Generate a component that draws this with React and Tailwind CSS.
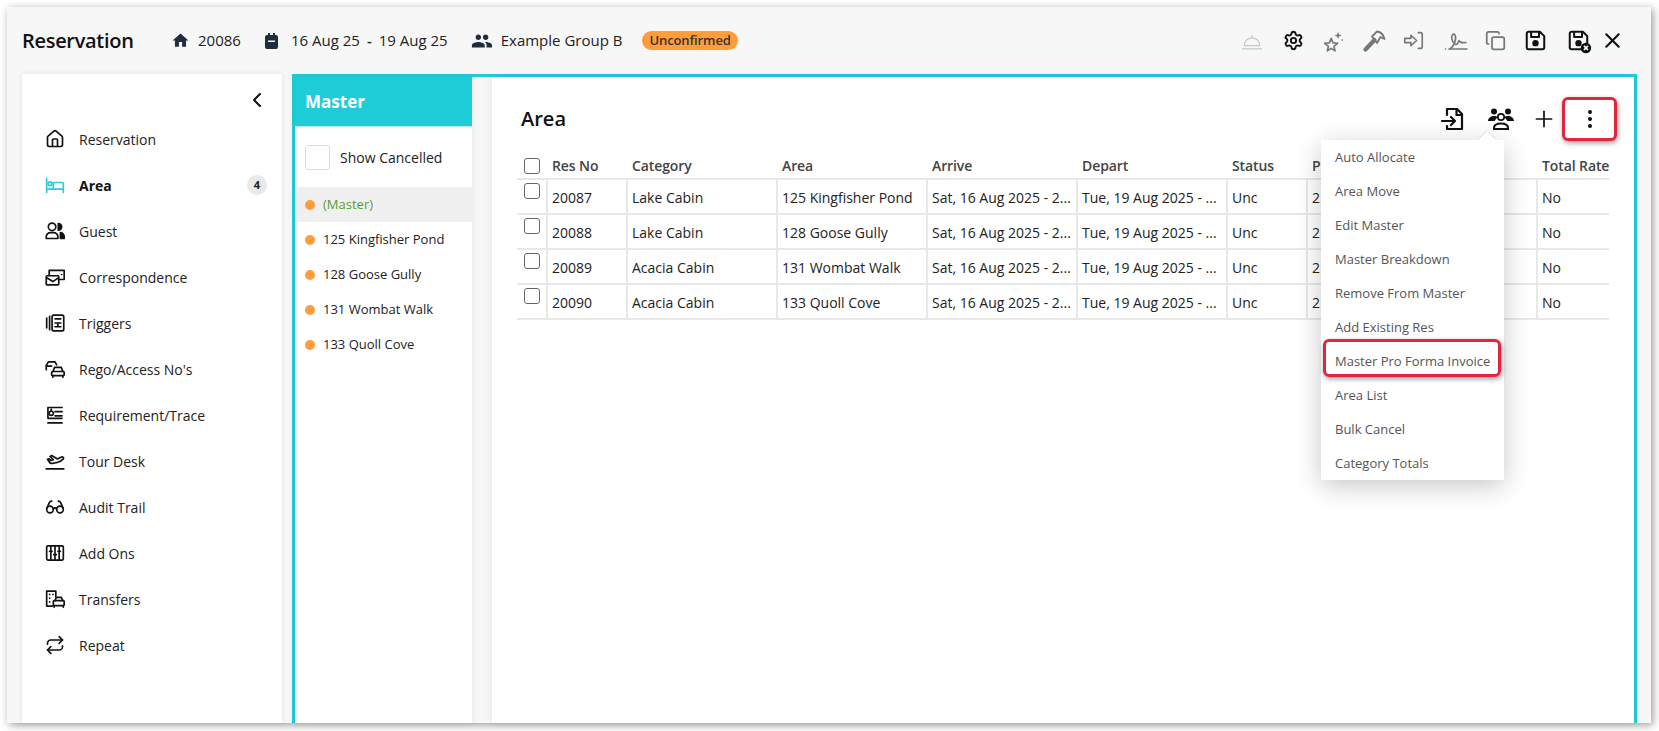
import { ChevronLeft, Plus, X, Home, Settings, Copy, Repeat, Glasses } from "lucide-react"
import { MdHome, MdPeople } from "react-icons/md"

// --- small drawn icons ---
const Svg = ({ children, size = 20, className = "", width = "2" }) => (
  <svg width={size} height={size} viewBox="0 0 24 24" fill="none" stroke="currentColor" strokeWidth={width} strokeLinecap="round" strokeLinejoin="round" className={className}>
    {children}
  </svg>
)

const BedIcon = () => (
  <Svg>
    <path d="M2 4v17M2 17h20M22 21V11a2 2 0 0 0-2-2H10v8" />
    <circle cx="6" cy="10.500" r="2.300" />
  </Svg>
)
const GuestIcon = () => (
  <Svg>
    <circle cx="8.500" cy="7" r="4.500" />
    <path d="M1.500 21v-2a5 5 0 0 1 5-5h4a5 5 0 0 1 5 5v2z" />
    <path d="M16 3a4 4 0 0 1 0 8z" fill="currentColor" />
    <path d="M18.500 14a4.500 4.500 0 0 1 4.500 4.500V21h-4.500z" fill="currentColor" />
  </Svg>
)
const MailIcon = () => (
  <Svg>
    <path d="M5 10V4h18v11h-6" />
    <rect x="1.500" y="10.500" width="15" height="11" rx="1" />
    <path d="M2 13l7.500 4.500L16 13" />
    <path d="M20 9h.1" />
  </Svg>
)
const TriggerIcon = () => (
  <Svg>
    <path d="M5.500 4v16M2 6v12" />
    <rect x="8.500" y="2.500" width="14" height="19" rx="2" />
    <path d="M12 7h7M12 12h7M12 16.500h7M15.500 12v4.500" />
  </Svg>
)
const CarsIcon = () => (
  <Svg>
    <path d="M1.500 13V8L4 3.500h8L14 7" />
    <path d="M1.500 8.500H8" />
    <path d="M9.500 15l2-5h8l2 5" />
    <rect x="8" y="15" width="15" height="5" rx="1" />
    <path d="M9.500 20v2M21.500 20v2" />
  </Svg>
)
const TraceIcon = () => (
  <Svg>
    <path d="M3.500 3h17M3.500 3v12M12 8h8.500M12 13h8.500M3.500 16h17M3.500 21.500h17" />
    <circle cx="7.500" cy="10" r="2.500" />
    <path d="M7.500 5v2" />
  </Svg>
)
const PlaneIcon = () => (
  <Svg>
    <path d="M1.500 21.500h21" />
    <path d="M3 10l3 4.500c5 1 12.500-1 16-5 1-2-1-3-3-2l-4 2-7-4-2 1 4 4-3 1-2-2z" />
  </Svg>
)
const AddOnIcon = () => (
  <Svg>
    <rect x="2" y="3.500" width="20" height="17" rx="1.500" />
    <path d="M7 3.500v17M12 3.500v17M17 3.500v17" />
    <path d="M5.500 10h3M10.500 14h3M15.500 10h3" />
  </Svg>
)
const TransferIcon = () => (
  <Svg>
    <path d="M9 20.500H2V2.500h11v7" />
    <path d="M5.500 6.500h.1M9.500 6.500h.1M5.500 11h.1M5.500 15.500h.1" />
    <path d="M12 14l1.500-4h6l2 4" />
    <rect x="10" y="14" width="13" height="6" rx="1" />
    <path d="M11 20v2M22 20v2" />
  </Svg>
)
const BellIcon = () => (
  <Svg size={22} width="1.400">
    <path d="M3.500 17a8.500 8.500 0 0 1 17 0z" />
    <path d="M1.500 20.500h21" />
    <path d="M12 8V6" />
  </Svg>
)
const StarsIcon = () => (
  <Svg size={22} width="1.800">
    <path d="M10 9l2 5 5 .5-4 3.300 1.200 5-4.200-2.800-4.200 2.800 1.200-5-4-3.300 5-.5z" />
    <path d="M17.500 2l1 3 3 1-3 1-1 3-1-3-3-1 3-1z" fill="currentColor" stroke="none" />
    <path d="M22 11h.1" />
  </Svg>
)
const HammerIcon = () => (
  <svg width="24" height="24" viewBox="0 0 24 24" fill="none" stroke="currentColor" strokeLinejoin="round" strokeLinecap="round">
    <path d="M3.500 20.500L12.500 11" strokeWidth="4.200" />
    <path d="M10 7.500L15 2.500c3.500.5 6.500 3 7.500 7.500L18.500 8l-3.500 6z" strokeWidth="1.800" />
  </svg>
)
const SignInIcon = () => (
  <Svg size={21} width="1.900">
    <path d="M2 9.500h7V6l6.500 6L9 18v-3.500H2z" />
    <path d="M17.500 3H20a2 2 0 0 1 2 2v14a2 2 0 0 1-2 2h-2.500" />
  </Svg>
)
const SignatureIcon = () => (
  <Svg size={24} width="1.600">
    <path d="M1.500 20h.1M6 20c4-3 7-10 5-14-1.500-2.500-4 .5-3 4.500 1 4 5 7 6 3l1-2c1 2.500 3 2.500 7 2" />
    <path d="M5 20h18" />
  </Svg>
)
const SaveIcon = ({ cross }) => (
  <svg width="21" height="21" viewBox="0 0 24 24" fill="none" stroke="currentColor" strokeWidth="2.300" strokeLinejoin="round" className="overflow-visible">
    <path d="M2 4a2 2 0 0 1 2-2h13l5 5v13a2 2 0 0 1-2 2H4a2 2 0 0 1-2-2z" />
    <path d="M7 2v6h9V2" />
    <circle cx="12" cy="15" r="2.500" fill="currentColor" />
    {cross && (
      <g>
        <circle cx="20.500" cy="20.500" r="6" fill="currentColor" stroke="none" />
        <path d="M18.200 18.200l4.600 4.600M22.800 18.200l-4.600 4.600" stroke="#fff" strokeWidth="1.800" />
      </g>
    )}
  </svg>
)
const CalendarIcon = () => (
  <svg width="13" height="16" viewBox="0 0 13 16" fill="currentColor">
    <path fillRule="evenodd" d="M3 0h2v2h3V0h2v2h1a2 2 0 0 1 2 2v10a2 2 0 0 1-2 2H2a2 2 0 0 1-2-2V4a2 2 0 0 1 2-2h1zM3 7.500v1.500h7V7.500z" />
  </svg>
)
const DocInIcon = () => (
  <svg width="24" height="24" viewBox="0 0 24 24" fill="none" stroke="currentColor" strokeWidth="2.200" strokeLinejoin="round" strokeLinecap="round">
    <path d="M6 8V2h10l5 5v15H6v-3" />
    <path d="M15.500 2v6H21" />
    <path d="M1 14h13M10 10l4 4-4 4" />
  </svg>
)
const GroupIcon = () => (
  <svg width="26" height="22" viewBox="0 0 26 22" fill="currentColor">
    <circle cx="6" cy="3.500" r="3" />
    <circle cx="20" cy="3.500" r="3" />
    <path d="M0 13c0-3 3-5 6-5 1.500 0 3 .4 4 1.200-1.500 1-2.700 2.300-3.300 3.800z" />
    <path d="M26 13c0-3-3-5-6-5-1.500 0-3 .4-4 1.200 1.500 1 2.700 2.300 3.300 3.800z" />
    <circle cx="13" cy="9" r="3.200" fill="none" stroke="currentColor" strokeWidth="1.700" />
    <path d="M6 21v-1c0-3 3-4.500 7-4.500s7 1.500 7 4.500v1z" fill="none" stroke="currentColor" strokeWidth="2" />
  </svg>
)
const KebabIcon = () => (
  <div className="flex flex-col gap-[3px]">
    <span className="w-[4px] h-[4px] rounded-full bg-[#111]"></span>
    <span className="w-[4px] h-[4px] rounded-full bg-[#111]"></span>
    <span className="w-[4px] h-[4px] rounded-full bg-[#111]"></span>
  </div>
)

const navItems = [
  { name: "Reservation", icon: <Home size={20} strokeWidth={2} /> },
  { name: "Area", icon: <BedIcon />, active: true, badge: 4 },
  { name: "Guest", icon: <GuestIcon /> },
  { name: "Correspondence", icon: <MailIcon /> },
  { name: "Triggers", icon: <TriggerIcon /> },
  { name: "Rego/Access No's", icon: <CarsIcon /> },
  { name: "Requirement/Trace", icon: <TraceIcon /> },
  { name: "Tour Desk", icon: <PlaneIcon /> },
  { name: "Audit Trail", icon: <Glasses size={20} strokeWidth={2} /> },
  { name: "Add Ons", icon: <AddOnIcon /> },
  { name: "Transfers", icon: <TransferIcon /> },
  { name: "Repeat", icon: <Repeat size={20} strokeWidth={2} /> },
]

const masterRows = ["(Master)", "125 Kingfisher Pond", "128 Goose Gully", "131 Wombat Walk", "133 Quoll Cove"]

const rows = [
  ["20087", "Lake Cabin", "125 Kingfisher Pond"],
  ["20088", "Lake Cabin", "128 Goose Gully"],
  ["20089", "Acacia Cabin", "131 Wombat Walk"],
  ["20090", "Acacia Cabin", "133 Quoll Cove"],
]

const menu = ["Auto Allocate", "Area Move", "Edit Master", "Master Breakdown", "Remove From Master", "Add Existing Res", "Master Pro Forma Invoice", "Area List", "Bulk Cancel", "Category Totals"]

const columns = [
  ["Res No", "w-[80px]"],
  ["Category", "w-[150px]"],
  ["Area", "w-[150px]"],
  ["Arrive", "w-[150px]"],
  ["Depart", "w-[150px]"],
  ["Status", "w-[80px]"],
  ["Pax", "w-[230px]"],
  ["Total Rate", "w-[73px]"],
]

const Box = () => <span className="block w-[16px] h-[16px] border border-[#666] rounded-[3px] bg-white"></span>

const Cell = ({ w, children }) => (
  <div className={`${w} shrink-0 h-full flex items-center pl-[4px] pt-[1px] overflow-hidden whitespace-nowrap border-l-2 border-[#e8e8e8]`}>
    {children}
  </div>
)

export default function App() {
  return (
    <div className="w-[1659px] h-[731px] bg-white overflow-hidden pl-[7px] pt-[7px] font-['Open_Sans',sans-serif] text-[#222]">
      <div className="w-[1644px] h-[716px] bg-[#f7f7f8] shadow-[2px_2px_8px_rgba(0,0,0,0.4)] flex flex-col">
        {/* top bar */}
        <div className="h-[67px] shrink-0 flex items-center pl-[15px] pr-[19px]">
          <h1 className="text-[20px] font-semibold text-[#111] w-[149px] tracking-[-0.3px]">Reservation</h1>
          <MdHome size={19} className="text-[#1f2d3d]" />
          <span className="text-[15px] ml-[8px] w-[67px]">20086</span>
          <span className="text-[#1f2d3d]"><CalendarIcon /></span>
          <span className="text-[15px] ml-[13px]">16 Aug 25</span>
          <span className="text-[15px] mx-[7px] font-semibold">-</span>
          <span className="text-[15px]">19 Aug 25</span>
          <MdPeople size={22} className="text-[#1f2d3d] ml-[23px]" />
          <span className="text-[15px] ml-[8px]">Example Group B</span>
          <span className="ml-[20px] h-[19px] px-[7px] rounded-full bg-[#ff9d3b] text-[13px] font-semibold text-[#333] tracking-[-0.1px] flex items-center">Unconfirmed</span>
          <div className="ml-auto flex items-center text-[#777]">
            <span className="w-[40px] flex justify-center text-[#c8c8c8]"><BellIcon /></span>
            <span className="w-[40px] ml-[1px] flex justify-center text-[#111]"><Settings size={21} strokeWidth={2.2} /></span>
            <span className="w-[40px] flex justify-center"><StarsIcon /></span>
            <span className="w-[40px] ml-[1px] flex justify-center"><HammerIcon /></span>
            <span className="w-[40px] -ml-[1px] flex justify-center"><SignInIcon /></span>
            <span className="w-[40px] ml-[3px] flex justify-center"><SignatureIcon /></span>
            <span className="w-[40px] -ml-[1px] flex justify-center"><Copy size={21} strokeWidth={2} /></span>
            <span className="w-[40px] flex justify-center text-[#111]"><SaveIcon /></span>
            <span className="w-[40px] ml-[3px] flex justify-center text-[#111]"><SaveIcon cross /></span>
            <span className="w-[40px] -ml-[6px] flex justify-center text-[#111]"><X size={25} strokeWidth={2} /></span>
          </div>
        </div>

        <div className="flex-1 min-h-0 flex pl-[15px] pr-[14px]">
          {/* sidebar */}
          <aside className="w-[260px] shrink-0 bg-white shadow-[0_0_6px_rgba(0,0,0,0.08)] flex flex-col">
            <div className="h-[42px] flex items-start justify-end pt-[14px] pr-[13px]">
              <ChevronLeft size={24} strokeWidth={2} className="text-[#111]" />
            </div>
            <nav className="flex flex-col">
              {navItems.map((item) => (
                <a key={item.name} className="h-[46px] flex items-center pl-[23px] pr-[15px] text-[14px] text-[#222]">
                  <span className={`w-[20px] h-[20px] ${item.active ? "text-[#2ccbd6]" : "text-[#111]"}`}>{item.icon}</span>
                  <span className={`ml-[14px] ${item.active ? "font-bold text-[#111]" : ""}`}>{item.name}</span>
                  {item.badge && (
                    <span className="ml-auto w-[20px] h-[20px] rounded-full bg-[#e9e9e9] text-[11px] font-bold flex items-center justify-center">{item.badge}</span>
                  )}
                </a>
              ))}
            </nav>
          </aside>

          {/* teal panel */}
          <section className="ml-[10px] flex-1 min-w-0 flex border-[3px] border-b-0 border-[#1fcdd8]">
            <div className="w-[177px] shrink-0 bg-white flex flex-col shadow-[0_0_8px_rgba(0,0,0,0.08)]">
              <div className="h-[50px] bg-[#1fcdd8] text-white text-[17px] font-bold flex items-center pl-[10px] pt-[1px] border-b border-[#b8e8ec]">Master</div>
              <label className="h-[60px] flex items-center pl-[10px]">
                <span className="w-[25px] h-[25px] border border-[#ddd] rounded-[3px]"></span>
                <span className="ml-[10px] text-[14px]">Show Cancelled</span>
              </label>
              {masterRows.map((name, i) => (
                <div key={name} className={`h-[35px] flex items-center pl-[10px] text-[13px] ${i === 0 ? "bg-[#f0f0f0] text-[#5b9d2c]" : ""}`}>
                  <span className="w-[10px] h-[10px] rounded-full bg-[#ff9d3b]"></span>
                  <span className="ml-[8px]">{name}</span>
                </div>
              ))}
            </div>

            <div className="ml-[20px] flex-1 min-w-0 bg-white shadow-[0_0_8px_rgba(0,0,0,0.08)] relative pl-[25px] pr-[25px]">
              <div className="h-[76px] flex items-center pt-[7px]">
                <h2 className="text-[20px] font-semibold text-[#111] ml-[4px]">Area</h2>
              </div>

              <div className="text-[14px] text-[#333] w-[1092px]">
                <div className="h-[27px] flex items-center font-semibold text-[#444] tracking-[-0.1px] border-b-2 border-[#e8e8e8]">
                  <div className="w-[29px] shrink-0 pl-[7px]"><Box /></div>
                  {columns.map(([h, w]) => (
                    <div key={h} className={`${w} shrink-0 px-[6px] whitespace-nowrap`}>{h}</div>
                  ))}
                </div>
                {rows.map((r) => (
                  <div key={r[0]} className="h-[35px] flex border-b-2 border-[#e8e8e8] text-[#222]">
                    <div className="w-[29px] shrink-0 pl-[7px] pt-[3px]"><Box /></div>
                    <Cell w="w-[80px]">{r[0]}</Cell>
                    <Cell w="w-[150px]">{r[1]}</Cell>
                    <Cell w="w-[150px]">{r[2]}</Cell>
                    <Cell w="w-[150px]">Sat, 16 Aug 2025 - 2...</Cell>
                    <Cell w="w-[150px]">Tue, 19 Aug 2025 - ...</Cell>
                    <Cell w="w-[80px]">Unc</Cell>
                    <Cell w="w-[230px]">2.00</Cell>
                    <Cell w="w-[73px]">No</Cell>
                  </div>
                ))}
              </div>

              {/* action icons */}
              <div className="absolute top-[20px] right-[17px] flex items-center text-[#111]">
                <DocInIcon />
                <span className="ml-[23px]"><GroupIcon /></span>
                <Plus size={26} strokeWidth={1.6} className="ml-[17px]" />
                <span className="ml-[5px] w-[55px] h-[44px] flex items-center justify-center border-[3px] border-[#e0263c] rounded-[6px] shadow-[1px_2px_5px_rgba(0,0,0,0.4)] bg-white"><KebabIcon /></span>
              </div>

              {/* dropdown menu */}
              <div className="absolute left-[829px] top-[63px] w-[183px] h-[340px] bg-white shadow-[0_6px_24px_rgba(0,0,0,0.22)] text-[13px] text-[#555]">
                <span className="absolute -top-[6px] right-[11px] w-[12px] h-[12px] rotate-45 bg-white shadow-[-1px_-1px_2px_rgba(0,0,0,0.08)]"></span>
                <div className="relative pt-[1px]">
                  {menu.map((m) => (
                    <div key={m} className="h-[34px] flex items-center pl-[14px] whitespace-nowrap">{m}</div>
                  ))}
                </div>
                <span className="absolute left-[2px] top-[199px] w-[178px] h-[38px] border-[3px] border-[#e0263c] rounded-[6px] shadow-[1px_2px_5px_rgba(0,0,0,0.4)]"></span>
              </div>
            </div>
          </section>
        </div>
      </div>
    </div>
  )
}
